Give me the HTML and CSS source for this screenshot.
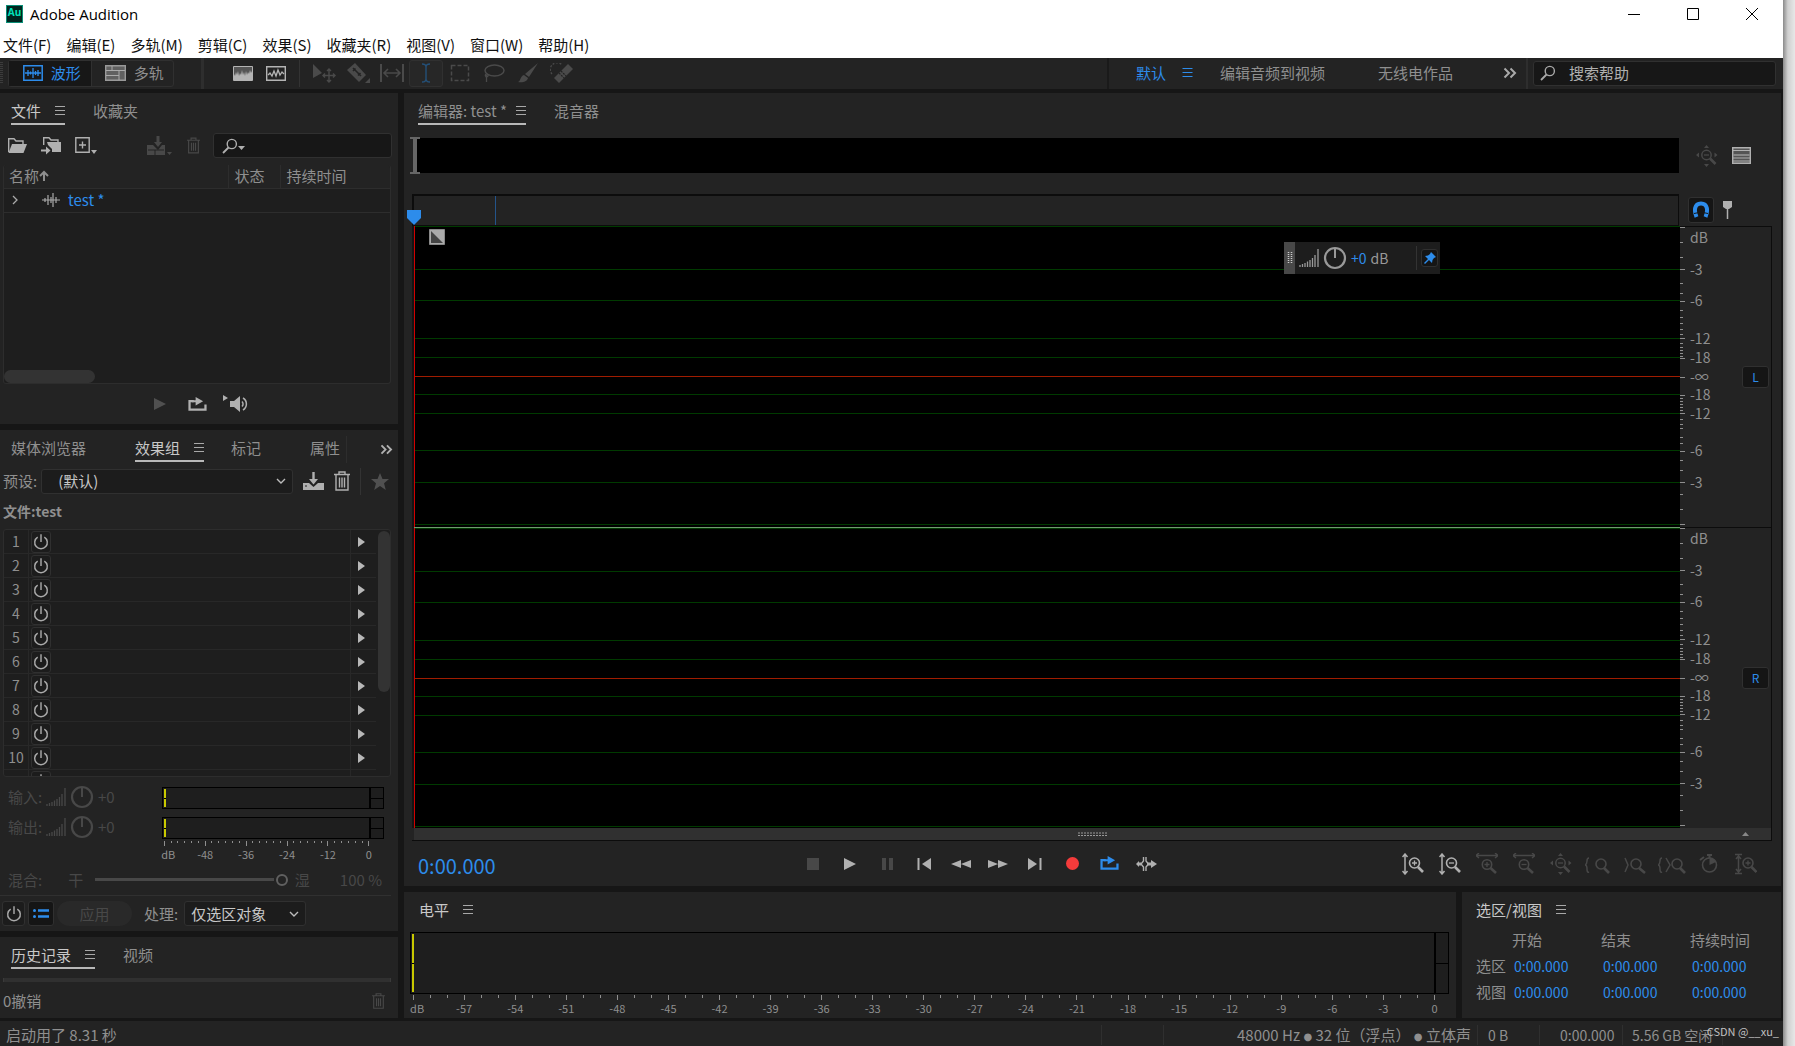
FILE: index.html
```html
<!DOCTYPE html>
<html lang="zh-CN">
<head>
<meta charset="utf-8">
<title>Adobe Audition</title>
<link rel="stylesheet" href="styles.css">
</head>
<body>
<svg class="defs" aria-hidden="true">
  <symbol id="power" viewBox="0 0 20 20"><path d="M6.3 4.6A7 7 0 1 0 13.7 4.6M10 1.5V10" fill="none" stroke="currentColor" stroke-width="1.6"/></symbol>
  <symbol id="menu" viewBox="0 0 10 10"><path d="M0 .5H10M0 4.5H10M0 8.5H10" stroke="currentColor" stroke-width="1"/></symbol>
  <symbol id="more" viewBox="0 0 14 12"><path d="M1.5 1.5L6 6L1.5 10.5M7.500 1.500L12 6L7.500 10.500" fill="none" stroke="currentColor" stroke-width="2"/></symbol>
  <symbol id="trash" viewBox="0 0 16 20"><path d="M0 3.500H16M5 3V1H11V3M2 4V19H14V4M5.500 6.500V16.500M8 6.500V16.500M10.500 6.500V16.500" fill="none" stroke="currentColor" stroke-width="1.400"/></symbol>
  <symbol id="bars" viewBox="0 0 20 18"><path d="M1 16V18M3.500 15V18M6 14V18M8.500 12.500V18M11 11V18M13.500 9V18M16 6V18M19 0V18" stroke="currentColor" stroke-width="1.300"/></symbol>
  <symbol id="knob" viewBox="0 0 24 24"><circle cx="12" cy="12" r="10" fill="none" stroke="currentColor" stroke-width="2.200"/><path d="M12 2V12" stroke="currentColor" stroke-width="2"/></symbol>
  <symbol id="search" viewBox="0 0 16 16"><circle cx="9.800" cy="6" r="4.600" fill="none" stroke="currentColor" stroke-width="1.400"/><path d="M6.500 9.500L1 15" stroke="currentColor" stroke-width="1.800"/></symbol>
  <symbol id="loop" viewBox="0 0 20 16"><path d="M6 4.500H1.500V13.500H18.500V8" fill="none" stroke="currentColor" stroke-width="2.400"/><path d="M4 3.500H8V0L16 4.500L8 9V5.500H4Z" fill="currentColor"/></symbol>
  <symbol id="zoomall" viewBox="0 0 22 22"><circle cx="10.500" cy="10" r="4.700" fill="none" stroke="currentColor" stroke-width="1.500"/><path d="M8 10H13" stroke="currentColor" stroke-width="1.300"/><path d="M14 13.500L19.500 19" stroke="currentColor" stroke-width="2.600"/><path d="M8 3L10.500 0L13 3ZM8 19L10.500 22L13 19ZM3 7.500L0 10L3 12.500ZM18.500 7.500L21.500 10L18.500 12.500Z" fill="currentColor"/></symbol>
  <symbol id="grip" viewBox="0 0 30 4"><path d="M0 1H30M0 3.500H30" stroke="currentColor" stroke-width="1" stroke-dasharray="2 1"/></symbol>
</svg>

<div class="screen">
<div class="window">
  <header class="titlebar">
    <svg class="logo" viewBox="0 0 17 18"><rect x=".5" y=".5" width="16" height="17" fill="#00261f" stroke="#0a8f78"/><text x="8.500" y="11" text-anchor="middle">Au</text></svg>
    <h1>Adobe Audition</h1>
    <div class="winctl">
      <button aria-label="最小化"><svg width="14" height="14"><path d="M1 7.500H13" stroke="#000"/></svg></button>
      <button aria-label="最大化"><svg width="14" height="14"><path d="M1.500 1.500H12.500V12.500H1.500Z" fill="none" stroke="#000"/></svg></button>
      <button aria-label="关闭"><svg width="14" height="14"><path d="M1 1L13 13M13 1L1 13" stroke="#000"/></svg></button>
    </div>
  </header>
  <nav class="menubar">
    <a href="#">文件(F)</a><a href="#">编辑(E)</a><a href="#">多轨(M)</a><a href="#">剪辑(C)</a><a href="#">效果(S)</a><a href="#">收藏夹(R)</a><a href="#">视图(V)</a><a href="#">窗口(W)</a><a href="#">帮助(H)</a>
  </nav>

  <div class="toolbar">
    <span class="tgrip"></span>
    <div class="modes">
      <button class="on"><svg width="20" height="16" viewBox="0 0 20 16"><path d="M.8.800H19.200V15.200H.8Z" fill="none" stroke="currentColor" stroke-width="1.500"/><path d="M2 8H18M5 5V11M7.500 6.500V9.500M10 3V13M12.500 6V10M15 5V11" stroke="currentColor" stroke-width="1.300"/></svg>波形</button>
      <button><svg width="21" height="16" viewBox="0 0 21 16"><path d="M.7.700H20.300V15.300H.7Z" fill="#606060" stroke="#999" stroke-width="1.400"/><path d="M1 5.500H20M7 1V5.500M1 10.500H14M14 6V15" stroke="#aaa" stroke-width="1"/></svg>多轨</button>
    </div>
    <span class="vsep thick"></span>
    <div class="views">
      <button aria-label="频谱"><svg width="20" height="15" viewBox="0 0 20 15"><path d="M.5.500H19.500V14.500H.5Z" fill="#555" stroke="#b4b4b4"/><path d="M1 14V8L2 10L3 6L4 9L5 5L6 10L7 7L8 9L9 4L10 9L11 6L12 10L13 5L14 9L15 6L16 8L17 4L18 7L19 5V14Z" fill="#b4b4b4"/></svg></button>
      <button aria-label="波形图"><svg width="20" height="15" viewBox="0 0 20 15"><path d="M.7.700H19.300V14.300H.7Z" fill="none" stroke="#b4b4b4" stroke-width="1.400"/><path d="M2 9L4 7L6 10L8 5L10 10L12 4L14 9L16 6L18 8" fill="none" stroke="#b4b4b4" stroke-width="1.300"/></svg></button>
    </div>
    <span class="vsep"></span>
    <div class="tools">
      <button aria-label="移动"><svg viewBox="0 0 24 20"><path d="M1 1L10 10L1 15Z" fill="currentColor"/><path d="M17 6V19M11 12.500H23M15 8L17 6L19 8M15 17L17 19L19 17M13 10.500L11 12.500L13 14.500M21 10.500L23 12.500L21 14.500" fill="none" stroke="currentColor" stroke-width="1.400"/></svg></button>
      <button aria-label="切割"><svg viewBox="0 0 24 20"><path d="M9 0L20 12L13 19L1 7Z" fill="currentColor"/><path d="M7 5L15 13M7 8L9.500 5.500M12 12.500L14.500 10" stroke="#232323" stroke-width="1.600"/><path d="M24 15V20H19Z" fill="currentColor"/></svg></button>
      <button aria-label="滑动"><svg viewBox="0 0 24 20"><path d="M1 1V19M23 1V19" stroke="currentColor" stroke-width="2"/><path d="M4 10H20M8 6L4 10L8 14M16 6L20 10L16 14" fill="none" stroke="currentColor" stroke-width="1.600"/></svg></button>
      <button class="sel" aria-label="时间选区"><svg viewBox="0 0 24 20"><path d="M8 1C11 1 12 2 12 4V16C12 18 13 19 16 19M16 1C13 1 12 2 12 4M12 16C12 18 11 19 8 19" fill="none" stroke="currentColor" stroke-width="1.400"/></svg></button>
      <button aria-label="框选"><svg viewBox="0 0 24 20"><path d="M3.500 2.500H20.500V17.500H3.500Z" fill="none" stroke="currentColor" stroke-width="1.500" stroke-dasharray="4 2"/></svg></button>
      <button aria-label="套索"><svg viewBox="0 0 24 20"><ellipse cx="12.500" cy="7.500" rx="9.500" ry="5.500" fill="none" stroke="currentColor" stroke-width="1.500"/><path d="M4 11C2 13 5 15 6 13S3 11 4.500 15V19" fill="none" stroke="currentColor" stroke-width="1.300"/></svg></button>
      <button aria-label="画笔"><svg viewBox="0 0 24 20"><path d="M22 0L13 14L9 11Z M8 12L12 15C11 19 6 20 2 19C5 18 4 13 8 12Z" fill="currentColor"/></svg></button>
      <button aria-label="修复"><svg viewBox="0 0 24 20"><path d="M18 1L23 6L9 20L4 15Z" fill="currentColor"/><path d="M2 11A6 6 0 0 1 12 2" fill="none" stroke="currentColor" stroke-width="1.300" stroke-dasharray="2 1.500"/><path d="M11 8L16 13M9 10L14 15" stroke="#232323" stroke-width="1.300" stroke-dasharray="2 1"/></svg></button>
    </div>
    <nav class="spaces">
      <a class="on" href="#">默认<svg width="11" height="10"><use href="#menu"/></svg></a>
      <a href="#">编辑音频到视频</a>
      <a href="#">无线电作品</a>
      <button aria-label="更多工作区"><svg width="14" height="12"><use href="#more"/></svg></button>
    </nav>
    <label class="help"><svg width="16" height="16"><use href="#search"/></svg><input type="text" placeholder="搜索帮助" aria-label="搜索帮助"></label>
  </div>

  <main class="work">
    <div class="left">
      <section class="panel files">
        <div class="tabs"><button class="tab on bright">文件<svg width="10" height="10"><use href="#menu"/></svg></button><button class="tab">收藏夹</button></div>
        <div class="filetools">
          <button aria-label="打开"><svg width="20" height="16" viewBox="0 0 20 16"><path d="M.7 14V.7H6L8 3H15V6" fill="none" stroke="currentColor" stroke-width="1.400"/><path d="M4 6H19L15.500 15H.5Z" fill="currentColor"/></svg></button>
          <button aria-label="导入"><svg width="21" height="18" viewBox="0 0 21 18"><path d="M2.700 8V.7H8L10 3H17V5" fill="none" stroke="currentColor" stroke-width="1.400"/><path d="M6 5H20V15H11V12L7 8Z" fill="currentColor"/><path d="M0 13.500H6" stroke="currentColor" stroke-width="2"/><path d="M5 9.500L9.500 13.500L5 17.500Z" fill="currentColor"/></svg></button>
          <button aria-label="新建"><svg width="22" height="18" viewBox="0 0 22 18"><path d="M.8.800H14.200V15.200H.8Z M7.500 4.500V11.500M4 8H11" fill="none" stroke="currentColor" stroke-width="1.400"/><path d="M16 13H22L19 17Z" fill="currentColor"/></svg></button>
          <button class="dim gapped" aria-label="插入多轨"><svg width="25" height="20" viewBox="0 0 25 20"><path d="M0 9H6L11 14L15 9H18V19H0Z" fill="currentColor"/><path d="M11 0V7" stroke="currentColor" stroke-width="3"/><path d="M7 6H15L11 11Z" fill="currentColor"/><path d="M1 14H17M8 14V19" stroke="#232323" stroke-width="1"/><path d="M20 16H25L22.500 19Z" fill="currentColor"/></svg></button>
          <button class="dim" aria-label="删除"><svg width="13" height="17"><use href="#trash"/></svg></button>
          <label class="field find"><svg width="16" height="16"><use href="#search"/></svg><svg class="caret" width="7" height="4"><path d="M0 0H7L3.500 4Z" fill="currentColor"/></svg><input type="text" aria-label="搜索文件"></label>
        </div>
        <div class="filelist">
          <table>
            <thead><tr><th>名称<svg width="10" height="12" viewBox="0 0 10 12"><path d="M5 11V2M1 6L5 2L9 6" fill="none" stroke="currentColor" stroke-width="2"/></svg></th><th class="c2">状态</th><th class="c3">持续时间</th></tr></thead>
            <tbody><tr><td colspan="3"><div class="fname"><svg width="6" height="10" viewBox="0 0 6 10"><path d="M1 1L5 5L1 9" fill="none" stroke="#aaa" stroke-width="1.300"/></svg><svg class="wv" width="18" height="14" viewBox="0 0 18 14"><path d="M0 7H18M3 5V9M6 2V12M9 4V10M11 0V14M14 4V10" stroke="#aaa" stroke-width="1.200"/></svg>test *</div></td></tr></tbody>
          </table>
          <div class="hscroll"></div>
        </div>
        <div class="preview">
          <button class="dim" aria-label="播放"><svg width="12" height="12"><path d="M0 0L12 6L0 12Z" fill="currentColor"/></svg></button>
          <button aria-label="循环"><svg width="19" height="15"><use href="#loop"/></svg></button>
          <button aria-label="自动播放"><svg width="26" height="18" viewBox="0 0 26 18"><path d="M0 0L5 3L0 6ZM7 6H11L17 1V17L11 12H7Z" fill="currentColor"/><path d="M19 6.500A3.500 3.500 0 0 1 19 11.500M20 3A7 7 0 0 1 20 15" fill="none" stroke="currentColor" stroke-width="1.500"/></svg></button>
        </div>
      </section>

      <section class="panel fx">
        <div class="tabs wide"><button class="tab">媒体浏览器</button><button class="tab on bright">效果组<svg width="10" height="10"><use href="#menu"/></svg></button><button class="tab">标记</button><button class="tab last">属性</button><span class="vsep"></span><button class="more" aria-label="更多面板"><svg width="13" height="11"><use href="#more"/></svg></button></div>
        <div class="preset">
          <label for="preset">预设:</label>
          <select id="preset"><option>(默认)</option></select>
          <button aria-label="保存预设"><svg width="21" height="18" viewBox="0 0 21 18"><path d="M0 11H6L10.500 15L15 11H21V18H0Z" fill="currentColor"/><path d="M10.500 0V8" stroke="currentColor" stroke-width="2.400"/><path d="M6 7H15L10.500 12.500Z" fill="currentColor"/><path d="M2 14H4" stroke="#222"/></svg></button>
          <button aria-label="删除预设"><svg width="16" height="20"><use href="#trash"/></svg></button>
          <span class="vsep"></span>
          <button class="dim" aria-label="收藏"><svg width="18" height="17" viewBox="0 0 18 17"><path d="M9 0L11.500 6H18L13 10.300L14.800 17L9 13L3.200 17L5 10.300L0 6H6.500Z" fill="currentColor"/></svg></button>
        </div>
        <h2 class="fxfile">文件:test</h2>
        <div class="rack"><ol id="rack"></ol><div class="vscroll"></div></div>
        <div class="io">
          <div class="iorow"><span>输入:</span><svg width="20" height="18"><use href="#bars"/></svg><svg width="24" height="24"><use href="#knob"/></svg><span>+0</span><div class="meter"><i></i></div></div>
          <div class="iorow"><span>输出:</span><svg width="20" height="18"><use href="#bars"/></svg><svg width="24" height="24"><use href="#knob"/></svg><span>+0</span><div class="meter"><i></i></div></div>
          <svg class="ruler small" id="ruler-small"></svg>
        </div>
        <div class="mix"><label for="mix">混合:</label><span class="dry">干</span><input id="mix" type="range" min="0" max="100" value="100" disabled><span>湿</span><span class="pct">100 %</span></div>
        <div class="apply">
          <button class="box" aria-label="启用"><svg width="18" height="18"><use href="#power"/></svg></button>
          <button class="box blue" aria-label="列表"><svg width="16" height="12" viewBox="0 0 16 12"><path d="M5 2.500H16M5 8.500H16" stroke="currentColor" stroke-width="2.600"/><circle cx="1.500" cy="2.500" r="1.500" fill="currentColor"/><circle cx="1.500" cy="8.500" r="1.500" fill="currentColor"/></svg></button>
          <button class="pill" disabled>应用</button>
          <label for="proc">处理:</label>
          <select id="proc"><option>仅选区对象</option></select>
        </div>
      </section>

      <section class="panel history">
        <div class="tabs"><button class="tab on bright">历史记录<svg width="10" height="10"><use href="#menu"/></svg></button><button class="tab">视频</button></div>
        <div class="groove"></div>
        <div class="undo"><span>0撤销</span><button class="dim" aria-label="清除历史"><svg width="13" height="16"><use href="#trash"/></svg></button></div>
      </section>
    </div>

    <div class="right">
      <section class="panel editor">
        <div class="tabs"><button class="tab on">编辑器: test *<svg width="10" height="10"><use href="#menu"/></svg></button><button class="tab">混音器</button></div>
        <div class="overview">
          <div class="track"><svg class="bracket" width="10" height="37"><path d="M0 1H10M0 36H10" stroke="#666" stroke-width="2"/><path d="M5 0V37" stroke="#666" stroke-width="4"/></svg></div>
          <div class="side"><svg class="dim" width="22" height="22"><use href="#zoomall"/></svg><svg width="19" height="17" viewBox="0 0 19 17"><path d="M.7.700H18.300V16.300H.7Z" fill="#555" stroke="currentColor" stroke-width="1.400"/><path d="M1 3.500H18M1 11H18M1 14H18" stroke="currentColor"/><path d="M1 8H18" stroke="#888" stroke-width="2"/></svg></div>
        </div>
        <div class="timeline">
          <div class="times"><i class="tick"></i><svg class="playhead" width="14" height="15"><path d="M0 0H14V8L7 15L0 8Z" fill="#2d8ceb"/></svg></div>
          <div class="side snap"><button class="box blue" aria-label="对齐"><svg width="16" height="17" viewBox="0 0 16 17"><path d="M3.500 16C1 10 1 2.500 8 2.500S15 10 12.500 16" fill="none" stroke="currentColor" stroke-width="4"/><path d="M1 12.500L6 11.500M15 12.500L10 11.500" stroke="#171717"/></svg></button><svg width="9" height="18"><path d="M0 0H9V6L6 8H3L0 6Z" fill="currentColor"/><path d="M4.500 6V18" stroke="currentColor" stroke-width="1.500"/></svg></div>
        </div>
        <div class="waves">
          <div class="wave">
            <svg class="lines"></svg><i class="split"></i><svg class="lines"></svg>
            <svg class="fade" width="16" height="16"><path d="M.5.500H15.500V15.500H.5Z" fill="#aaa" stroke="#888"/><path d="M2 2L14 14H2Z" fill="#444"/></svg>
            <div class="hud"><svg class="hgrip" width="11" height="32"><path d="M4.500 10V22M7.500 10V22" stroke="#ccc" stroke-width="1.500" stroke-dasharray="1 1"/></svg><svg width="20" height="18"><use href="#bars"/></svg><svg width="24" height="24"><use href="#knob"/></svg><span class="val">+0</span><span>dB</span><span class="hsep"></span><button class="box blue" aria-label="固定"><svg width="12" height="12" viewBox="0 0 12 12"><path d="M7 0L12 5L10 6L8.500 8L8 11L5 8L1 12L0 11L4 7L1 4L4 3.500L6 2Z" fill="currentColor"/></svg></button></div>
          </div>
          <div class="scale">
            <div class="chan"><svg class="dbs"></svg><button class="box blue">L</button></div>
            <div class="chan"><svg class="dbs"></svg><button class="box blue">R</button></div>
          </div>
          <div class="zoombar"><svg width="30" height="4"><use href="#grip"/></svg><svg class="up" width="7" height="4"><path d="M0 4L3.500 0L7 4Z" fill="#888"/></svg></div>
        </div>
        <div class="transport">
          <output class="clock">0:00.000</output>
          <div class="play">
            <button class="dim" aria-label="停止"><svg width="12" height="12"><rect width="12" height="12" fill="currentColor"/></svg></button>
            <button aria-label="播放"><svg width="12" height="12"><path d="M0 0L12 6L0 12Z" fill="currentColor"/></svg></button>
            <button class="dim" aria-label="暂停"><svg width="11" height="12"><path d="M2 0V12M9 0V12" stroke="currentColor" stroke-width="4"/></svg></button>
            <button aria-label="到开头"><svg width="14" height="12"><path d="M1.500 0V12" stroke="currentColor" stroke-width="2"/><path d="M14 0L5 6L14 12Z" fill="currentColor"/></svg></button>
            <button aria-label="快退"><svg width="20" height="10"><path d="M10 1L0 5L10 9ZM20 1L10 5L20 9Z" fill="currentColor"/></svg></button>
            <button aria-label="快进"><svg width="20" height="10"><path d="M0 1L10 5L0 9ZM10 1L20 5L10 9Z" fill="currentColor"/></svg></button>
            <button aria-label="到结尾"><svg width="14" height="12"><path d="M12.500 0V12" stroke="currentColor" stroke-width="2"/><path d="M0 0L9 6L0 12Z" fill="currentColor"/></svg></button>
            <button class="rec" aria-label="录制"><svg width="13" height="13"><circle cx="6.500" cy="6.500" r="6.500" fill="currentColor"/></svg></button>
            <button class="bl" aria-label="循环播放"><svg width="19" height="15"><use href="#loop"/></svg></button>
            <button aria-label="跳过选区"><svg width="21" height="14" viewBox="0 0 21 14"><path d="M2 7H5M11 7H17" stroke="currentColor" stroke-width="3"/><path d="M0 7L3 4V10Z" fill="currentColor"/><path d="M7.500 0V4L5 7L7.500 10V14M10 0V4L12.500 7L10 10V14" fill="none" stroke="currentColor" stroke-width="1.400"/><path d="M15 3L21 7L15 11Z" fill="currentColor"/></svg></button>
          </div>
          <div class="zooms">
            <button aria-label="放大振幅"><svg viewBox="0 0 22 22"><path d="M3 1V21M.5 4L3 1L5.500 4M.5 18L3 21L5.500 18" fill="none" stroke="currentColor" stroke-width="1.500"/><circle cx="12.500" cy="10" r="5" fill="none" stroke="currentColor" stroke-width="1.600"/><path d="M10 10H15M12.500 7.500V12.500" stroke="currentColor" stroke-width="1.300"/><path d="M16 14L21 19" stroke="currentColor" stroke-width="2.600"/></svg></button>
            <button aria-label="缩小振幅"><svg viewBox="0 0 22 22"><path d="M3 1V21M.5 4L3 1L5.500 4M.5 18L3 21L5.500 18" fill="none" stroke="currentColor" stroke-width="1.500"/><circle cx="12.500" cy="10" r="5" fill="none" stroke="currentColor" stroke-width="1.600"/><path d="M10 10H15" stroke="currentColor" stroke-width="1.300"/><path d="M16 14L21 19" stroke="currentColor" stroke-width="2.600"/></svg></button>
            <button class="dim" aria-label="放大时间"><svg viewBox="0 0 22 22"><path d="M0 2.500H22M3 0L0 2.500L3 5M19 0L22 2.500L19 5" fill="none" stroke="currentColor" stroke-width="1.400"/><circle cx="11" cy="11.500" r="4.700" fill="none" stroke="currentColor" stroke-width="1.600"/><path d="M8.500 11.500H13.500M11 9V14" stroke="currentColor" stroke-width="1.300"/><path d="M14.500 15L20 20" stroke="currentColor" stroke-width="2.600"/></svg></button>
            <button class="dim" aria-label="缩小时间"><svg viewBox="0 0 22 22"><path d="M0 2.500H22M3 0L0 2.500L3 5M19 0L22 2.500L19 5" fill="none" stroke="currentColor" stroke-width="1.400"/><circle cx="11" cy="11.500" r="4.700" fill="none" stroke="currentColor" stroke-width="1.600"/><path d="M8.500 11.500H13.500" stroke="currentColor" stroke-width="1.300"/><path d="M14.500 15L20 20" stroke="currentColor" stroke-width="2.600"/></svg></button>
            <button class="dim" aria-label="全部缩小"><svg><use href="#zoomall"/></svg></button>
            <button class="dim" aria-label="放大入点"><svg class="mid" viewBox="0 0 25 22"><path d="M4 5Q2 5 2 8T0 12Q2 12 2 16T4 19" fill="none" stroke="currentColor" stroke-width="1.500"/><circle cx="16" cy="11" r="5" fill="none" stroke="currentColor" stroke-width="1.600"/><path d="M19 15L24 20" stroke="currentColor" stroke-width="2.600"/></svg></button>
            <button class="dim" aria-label="放大出点"><svg viewBox="0 0 22 22"><path d="M1 5L4 12L1 19" fill="none" stroke="currentColor" stroke-width="1.500"/><circle cx="12" cy="11" r="5" fill="none" stroke="currentColor" stroke-width="1.600"/><path d="M15 15L21 20" stroke="currentColor" stroke-width="2.600"/></svg></button>
            <button class="dim" aria-label="放大选区"><svg class="long" viewBox="0 0 28 22"><path d="M4 5Q2 5 2 8T0 12Q2 12 2 16T4 19M8 5L12 12L8 19" fill="none" stroke="currentColor" stroke-width="1.500"/><circle cx="19" cy="11" r="5" fill="none" stroke="currentColor" stroke-width="1.600"/><path d="M22 15L27 20" stroke="currentColor" stroke-width="2.600"/></svg></button>
            <button class="dim" aria-label="计时缩放"><svg viewBox="0 0 22 22"><circle cx="11.500" cy="12" r="7" fill="none" stroke="currentColor" stroke-width="1.600"/><path d="M11.500 12V5A7 7 0 0 1 18 9Z" fill="currentColor"/><path d="M9 2H14M11.500 2V5M2 7L6 4" stroke="currentColor" stroke-width="2"/></svg></button>
            <button class="dim" aria-label="缩放高度"><svg viewBox="0 0 22 22"><path d="M0 1.500H7M0 20.500H7M3.500 3V19M1 6L3.500 3L6 6M1 16L3.500 19L6 16" fill="none" stroke="currentColor" stroke-width="1.500"/><circle cx="13" cy="10" r="5" fill="none" stroke="currentColor" stroke-width="1.600"/><path d="M10.500 10H15.500M13 7.500V12.500" stroke="currentColor" stroke-width="1.300"/><path d="M16.500 14L21.500 19" stroke="currentColor" stroke-width="2.600"/></svg></button>
          </div>
        </div>
      </section>

      <div class="bottom">
        <section class="panel levels">
          <div class="tabs"><button class="tab bright">电平<svg width="10" height="10"><use href="#menu"/></svg></button></div>
          <div class="meter big"><i></i></div>
          <svg class="ruler" id="ruler-big"></svg>
        </section>
        <section class="panel selection">
          <div class="tabs"><button class="tab bright">选区/视图<svg width="10" height="10"><use href="#menu"/></svg></button></div>
          <table>
            <tr><td></td><th>开始</th><th>结束</th><th>持续时间</th></tr>
            <tr><th>选区</th><td>0:00.000</td><td>0:00.000</td><td>0:00.000</td></tr>
            <tr><th>视图</th><td>0:00.000</td><td>0:00.000</td><td>0:00.000</td></tr>
          </table>
        </section>
      </div>
    </div>
  </main>

  <footer class="status">
    <span class="msg">启动用了 8.31 秒</span>
    <span class="s1"></span><span class="s2"></span>
    <span class="fmt">48000 Hz <b>●</b> 32 位（浮点） <b>●</b> 立体声</span>
    <span class="s3">0 B</span><span class="s4">0:00.000</span><span class="s5">5.56 GB 空闲</span>
    <span class="mark">CSDN @__xu_</span>
  </footer>
</div>
<div class="desktop"></div>
</div>
<script src="app.js"></script>
</body>
</html>
```
FILE: styles.css
```css
* { box-sizing: border-box; }
body {
  margin: 0;
  background: #e6e6e6;
  color: #8f8f8f;
  font: 15px/22px "Noto Sans CJK SC", sans-serif;
}
button, input, select, output { font: inherit; color: inherit; }
button { background: none; border: 0; padding: 0; display: flex; align-items: center; justify-content: center; white-space: nowrap; }
input { background: none; border: 0; padding: 0; min-width: 0; outline: 0; }
a { color: inherit; text-decoration: none; }
svg { display: block; flex: none; }
table { border-collapse: collapse; }
th { font-weight: 400; text-align: left; }
h1, h2, ol { margin: 0; padding: 0; }
.defs { display: none; }

.screen { display: flex; height: 100vh; min-height: 1000px; }
.window { flex: 1; min-width: 0; display: flex; flex-direction: column; background: #161616; }
.desktop { width: 12px; background: linear-gradient(90deg, #8a8a8a, #cfcfcf 40%, #e8e8e8); }

/* title and menus */
.titlebar { height: 31px; background: #fff; color: #000; display: flex; align-items: center; padding: 0 2px 4px 6px; gap: 7px; }
.titlebar h1 { flex: 1; font: 15px/20px "Open Sans", sans-serif; }
.logo { width: 17px; height: 18px; }
.logo text { font: 700 10px "Open Sans", sans-serif; fill: #00e4bb; }
.winctl { display: flex; }
.winctl button { width: 59px; height: 27px; }
.menubar { height: 27px; background: #fff; color: #111; display: flex; align-items: center; gap: 15px; padding-left: 3px; line-height: 27px; }

/* toolbar */
.toolbar { height: 31px; background: #232323; display: flex; align-items: center; padding-bottom: 1px; }
.tgrip { width: 3px; height: 22px; margin-right: 5px; background: repeating-linear-gradient(#3c3c3c 0 1px, transparent 1px 2px); }
.modes { display: flex; border: 1px solid #303030; border-radius: 3px; height: 27px; width: 166px; }
.modes button { flex: 1; gap: 8px; padding-left: 4px; }
.modes .on { background: #171717; border-right: 1px solid #303030; color: #2d8ceb; }
.vsep { width: 1px; height: 27px; background: #333; flex: none; }
.vsep.thick { width: 3px; height: 31px; background: #2e2e2e; margin-left: 27px; }
.views { display: flex; gap: 13px; padding: 0 13px 0 29px; }
.tools { display: flex; padding-left: 7px; color: #4a4a4a; }
.tools button { width: 34px; height: 27px; }
.tools svg { width: 24px; height: 20px; }
.tools .sel { border: 1px solid #303030; border-radius: 3px; background: #272727; color: #245078; }
.spaces { margin-left: auto; display: flex; align-items: center; border-left: 2px solid #1a1a1a; border-right: 2px solid #2e2e2e; height: 31px; padding: 0 9px 0 27px; gap: 53px; }
.spaces a { display: flex; align-items: center; gap: 16px; }
.spaces a.on { color: #2d8ceb; margin-right: -26px; }
.spaces button { color: #aaa; margin-left: -3px; }
.help { width: 243px; height: 25px; margin: 0 7px 0 5px; background: #171717; border: 1px solid #303030; border-radius: 3px; display: flex; align-items: center; padding-left: 6px; gap: 13px; color: #aaa; }
.help input { flex: 1; }
.help input::placeholder { color: #b0b0b0; opacity: 1; }

/* panels */
.work { flex: 1; min-height: 0; display: flex; gap: 6px; padding: 4px 2px 3px 0; }
.left { width: 398px; flex: none; display: flex; flex-direction: column; gap: 6px; }
.right { flex: 1; min-width: 0; display: flex; flex-direction: column; gap: 6px; }
.panel { background: #232323; display: flex; flex-direction: column; min-width: 0; }
.tabs { display: flex; align-items: center; gap: 28px; padding: 6px 11px 0; height: 32px; flex: none; }
.tab { height: 26px; gap: 14px; border-bottom: 2px solid transparent; line-height: 24px; }
.tab svg { color: #a8a8a8; }
.tab.on { border-color: #b8b8b8; }
.tab.bright { color: #c8c8c8; }
.dim { color: #484848; }
.box { border: 1px solid #303030; border-radius: 3px; background: #1c1c1c; color: #aaa; }
.box.blue { background: #151515; color: #2d8ceb; }

.files { flex: 1; min-height: 0; }
.filetools { display: flex; align-items: center; padding: 1px 6px 0 8px; height: 40px; gap: 13px; color: #b0b0b0; }
.filetools .dim { color: #484848; }
.filetools .gapped { margin: 0 2px 0 37px; }
.field { display: flex; align-items: center; background: #171717; border: 1px solid #303030; border-radius: 3px; }
.find { flex: 1; min-width: 0; height: 25px; padding-left: 8px; }
.find .caret { margin-top: 4px; }
.find input { flex: 1; width: 0; }
.filelist { flex: 1; margin: 0 7px 0 3px; display: flex; flex-direction: column; justify-content: space-between; background: #1e1e1e; border: 1px solid #2d2d2d; border-top: 0; border-radius: 3px; overflow: hidden; }
.filelist table { width: 100%; }
.filelist thead { background: #232323; }
.filelist th { height: 23px; padding: 0 0 0 6px; line-height: 20px; border-left: 1px solid #2d2d2d; }
.filelist th:first-child { border: 0; padding-left: 5px; }
.filelist th svg { display: inline-block; }
.filelist .c2 { width: 52px; }
.filelist .c3 { width: 110px; }
.filelist td { padding: 0; height: 24px; border-top: 1px solid #2d2d2d; border-bottom: 1px solid #2d2d2d; }
.fname { display: flex; align-items: center; padding-left: 8px; gap: 8px; color: #2d8ceb; line-height: 22px; }
.fname .wv { margin-left: 16px; }
.hscroll { width: 91px; height: 13px; border-radius: 7px; background: #333; }
.preview { height: 40px; flex: none; display: flex; align-items: center; justify-content: center; gap: 16px; color: #b0b0b0; padding-left: 4px; }
.preview .dim { color: #505050; margin-right: 6px; }

/* effects rack */
.tabs.wide { gap: 0; padding-right: 5px; }
.tabs.wide .tab { margin-right: 49px; }
.tabs.wide .on { margin-right: 27px; }
.tabs.wide .last { margin-right: 6px; }
.tabs.wide .vsep { background: #2d2d2d; }
.more { color: #b0b0b0; margin-left: auto; }
.preset { display: flex; align-items: center; padding: 0 9px 0 3px; height: 38px; gap: 10px; color: #b0b0b0; }
.preset label { color: #8f8f8f; margin-right: -6px; }
.preset .dim { color: #505050; }
select { appearance: none; height: 25px; border: 1px solid #303030; border-radius: 3px; color: #c8c8c8; line-height: 22px; padding: 0 16px; background: #1c1c1c url("data:image/svg+xml,%3Csvg xmlns='http://www.w3.org/2000/svg' width='10' height='6'%3E%3Cpath d='M1 1L5 5L9 1' fill='none' stroke='%23bbb' stroke-width='1.400'/%3E%3C/svg%3E") no-repeat right 6px center; }
#preset { flex: 1; }
#proc { width: 122px; padding: 0 6px; }
.fxfile { font-size: 14px; line-height: 22px; font-weight: 700; padding: 0 3px; margin-bottom: 7px; }
.rack { margin: 0 7px 0 3px; height: 248px; display: flex; gap: 2px; overflow: hidden; background: #1e1e1e; border: 1px solid #2d2d2d; border-radius: 3px; }
.rack ol { list-style: none; flex: 1; }
.rack li { height: 24px; display: flex; align-items: center; border-bottom: 1px solid #282828; }
.rack li .no { width: 25px; text-align: center; border-right: 1px solid #282828; line-height: 23px; font-size: 14px; }
.rack li .box { width: 20px; height: 22px; margin-left: 2px; }
.rack li .arrow { margin-left: auto; width: 26px; height: 23px; border-left: 1px solid #282828; color: #b8b8b8; padding-right: 4px; }
.vscroll { width: 12px; height: 161px; border-radius: 6px; background: #333; margin-top: 1px; }
.io { padding: 8px 14px 0 8px; display: flex; flex-direction: column; color: #484848; }
.iorow { display: flex; align-items: center; gap: 4px; height: 30px; padding-bottom: 6px; white-space: nowrap; }
.iorow span:first-child { width: 34px; }
.iorow .meter { margin-top: 2px; }
.meter { position: relative; margin-left: auto; width: 222px; height: 22px; border: 1px solid #000; background: #1e1e1e; }
.meter i { display: block; margin: 1px; width: 2px; height: calc(100% - 2px); background: linear-gradient(#000, #000) center / 100% 1px no-repeat #c8c800; }
/* clip lights at the loud end of a meter */
.meter::after { content: ""; position: absolute; top: 0; right: 0; bottom: 0; width: 12px; border-left: 2px solid #000; background: linear-gradient(#000, #000) center / 100% 1px no-repeat; }
.ruler { height: 24px; width: 100%; overflow: visible; }
.ruler text { font-size: 11px; fill: #8f8f8f; text-anchor: middle; }
.ruler.small { width: 222px; align-self: flex-end; margin-top: -5px; }
.mix { display: flex; align-items: center; height: 32px; padding: 0 9px 0 8px; color: #484848; border-bottom: 1px solid #303030; margin: 0 7px 0 0; }
.mix .dry { margin: 0 10px 0 26px; }
.mix input { flex: 1; appearance: none; height: 14px; margin-right: 7px; background: linear-gradient(#484848, #484848) 0 50% / calc(100% - 14px) 3px no-repeat; }
.mix input::-webkit-slider-thumb { appearance: none; width: 12px; height: 12px; border: 2px solid #606060; border-radius: 50%; background: #232323; }
.mix .pct { margin-left: 30px; }
.apply { display: flex; align-items: center; padding: 5px 2px 5px; gap: 3px; }
.apply .box { width: 23px; height: 25px; }
.apply .box.blue { width: 26px; }
.pill { width: 75px; height: 25px; border-radius: 13px; background: #292929; color: #484848; }
.apply label { margin: 0 3px 0 9px; }

.history { height: 81px; }
.groove { height: 4px; margin: 9px 7px 0 3px; background: #303030; border-left: 1px solid #3a3a3a; border-right: 1px solid #3a3a3a; }
.undo { display: flex; justify-content: space-between; align-items: center; padding: 8px 13px 0 3px; }

/* editor */
.editor { flex: 1; min-height: 0; padding-left: 8px; }
.editor .tabs { padding-left: 6px; height: 45px; align-items: flex-start; }
.editor .tab { gap: 9px; }
.overview { display: flex; height: 35px; margin-bottom: 21px; }
.track { position: relative; flex: 1; margin-left: 1px; background: #000; }
.bracket { position: absolute; left: -3px; top: -1px; }
.side { width: 102px; display: flex; align-items: center; gap: 14px; padding-left: 17px; color: #b0b0b0; }
.side .dim { color: #484848; }
.timeline { display: flex; height: 32px; }
.times { position: relative; flex: 1; border: 2px solid #0c0c0c; border-width: 2px 1px 1px 2px; }
.tick { position: absolute; left: 81px; top: 0; bottom: 0; width: 1px; background: #24548a; }
.playhead { position: absolute; left: -7px; bottom: 0; z-index: 2; }
.snap { gap: 9px; padding: 0 0 1px 9px; }
.snap .box { width: 26px; height: 26px; }
.waves { flex: 1; min-height: 0; display: grid; grid-template-columns: 1fr 92px; grid-template-rows: 1fr 12px; margin-right: 9px; border-bottom: 1px solid #0c0c0c; }
.wave { position: relative; background: #000; border-left: 2px solid #141414; display: flex; flex-direction: column; min-height: 0; box-shadow: inset 1px 0 #d00000; }
.lines { flex: 1; width: 100%; min-height: 0; overflow: visible; }
.split { height: 1px; background: #6f9a6f; }
.lines line, .dbs line, .ruler line { shape-rendering: crispEdges; }
.lines .g { stroke: #003a00; }
.lines .m { stroke: #a01c00; }
.fade { position: absolute; left: 15px; top: 3px; }
.hud { position: absolute; right: 240px; top: 16px; width: 156px; height: 32px; display: flex; align-items: center; gap: 4px; background: #1d1d1d; color: #999; padding-right: 2px; font-size: 14px; }
.hud .hgrip { background: #484848; }
.hud .val { color: #2d8ceb; }
.hsep { margin-left: auto; width: 1px; height: 24px; background: #333; }
.hud .box { width: 17px; height: 18px; }
.scale { display: flex; flex-direction: column; border-right: 1px solid #0c0c0c; min-height: 0; }
.chan { flex: 1; min-height: 0; display: flex; align-items: center; justify-content: space-between; border-top: 1px solid #0c0c0c; padding-right: 2px; }
.dbs { width: 50px; height: 100%; overflow: visible; }
.dbs line, .ruler line { stroke: #8f8f8f; }
.dbs text { font-size: 14px; fill: #8f8f8f; }
.chan .box { width: 27px; height: 22px; font-size: 12px; }
.zoombar { grid-column: 1 / 3; background: #303030; display: flex; align-items: center; justify-content: center; color: #999; position: relative; margin-left: 2px; border-right: 1px solid #0c0c0c; }
.up { position: absolute; right: 22px; }
.transport { display: flex; align-items: center; height: 45px; padding-left: 6px; color: #b0b0b0; }
.clock { color: #2d8ceb; font-size: 20px; line-height: 24px; flex: 383 1 0; padding-top: 4px; }
.play, .zooms { display: flex; }
.play button, .zooms button { width: 37px; height: 30px; }
.play .dim, .zooms .dim { color: #484848; }
.play .rec { color: #f53b3b; }
.play .bl { color: #2d8ceb; }
.zooms { flex: 609 1 0; justify-content: flex-end; padding-right: 17px; }
.zooms svg { width: 22px; height: 22px; }
.zooms .mid { width: 25px; }
.zooms .long { width: 28px; }

/* lower panels */
.bottom { display: flex; gap: 6px; height: 126px; flex: none; }
.levels { flex: 1; padding: 0 7px 0 6px; }
.levels .tabs { padding-left: 9px; height: 40px; align-items: flex-start; }
.meter.big { width: 100%; height: 62px; margin: 0; flex: none; }
.selection { width: 319px; padding-left: 14px; }
.selection .tabs { padding-left: 0; }
.selection table { width: 300px; margin-top: 3px; }
.selection td, .selection th { height: 26px; padding: 0; }
.selection td { color: #2d8ceb; font-size: 14px; padding-left: 2px; }
.selection td:first-child, .selection th:first-child { width: 36px; }
.selection th:nth-child(2), .selection th:nth-child(3) { width: 89px; }

.status { height: 25px; background: #232323; display: flex; align-items: center; padding: 2px 5px 0 6px; position: relative; white-space: nowrap; }
.status span { border-right: 1px solid #2f2f2f; line-height: 20px; }
.status .msg { flex: 1; }
.status .s2 { width: 61px; height: 20px; }
.status .fmt { width: 314px; padding-left: 73px; }
.status b { font: 10px "DejaVu Sans", sans-serif; vertical-align: 1px; }
.status .s3 { width: 62px; padding-left: 10px; font-size: 14px; }
.status .s4 { width: 83px; padding-left: 20px; font-size: 14px; }
.status .s5 { width: 100px; padding-left: 9px; margin-right: 55px; font-size: 14px; }
.status .mark { position: absolute; right: 4px; top: 0; border: 0; font-size: 11px; color: #c0c0c0; }
```
FILE: app.js
```js
const NS = 'http://www.w3.org/2000/svg';

function add(svg, tag, attrs, text) {
  const el = document.createElementNS(NS, tag);
  for (const k in attrs) el.setAttribute(k, attrs[k]);
  if (text) el.textContent = text;
  svg.appendChild(el);
}

// effect slots
document.getElementById('rack').innerHTML = Array.from({ length: 11 }, (_, i) =>
  `<li><span class="no">${i + 1}</span>` +
  `<button class="box" aria-label="开关 ${i + 1}"><svg width="18" height="18"><use href="#power"/></svg></button>` +
  `<button class="arrow" aria-label="效果 ${i + 1}"><svg width="7" height="10"><path d="M0 0L7 5L0 10Z" fill="currentColor"/></svg></button></li>`
).join('');

// amplitude grid: position in a 300-unit channel, and its label
const marks = [[43, '-3'], [74, '-6'], [112, '-12'], [131, '-18'], [150, '-∞'],
  [168, '-18'], [187, '-12'], [224, '-6'], [256, '-3']];
const minor = [16, 31, 56, 66, 83, 90, 97, 102, 107, 116, 120, 123, 126, 129,
  171, 174, 177, 181, 184, 192, 197, 202, 210, 216, 233, 243, 268, 283];
const pct = y => (y / 3).toFixed(2) + '%';

document.querySelectorAll('.lines').forEach(svg => {
  [1, ...marks.map(m => m[0]), 298].forEach(y =>
    add(svg, 'line', { x1: 1, x2: '100%', y1: pct(y), y2: pct(y), class: y === 150 ? 'm' : 'g' }));
});
document.querySelectorAll('.dbs').forEach(svg => {
  minor.forEach(y => add(svg, 'line', { x1: 0, x2: 3, y1: pct(y), y2: pct(y) }));
  [1, ...marks.map(m => m[0]), 298].forEach(y =>
    add(svg, 'line', { x1: 0, x2: 5, y1: pct(y), y2: pct(y) }));
  [[11, 'dB'], ...marks].forEach(([y, t]) =>
    add(svg, 'text', { x: 10, y: pct(y), dy: 5 }, t));
});

// level rulers: start and end are shares of the meter's width
function ruler(id, start, end, low, step, sub, long, short) {
  const svg = document.getElementById(id);
  const n = -low / step * sub;
  for (let i = 0; i <= n; i++) {
    const x = (start + (end - start) * i / n).toFixed(2) + '%';
    const major = i % sub === 0;
    add(svg, 'line', { x1: x, x2: x, y1: 1, y2: major ? long : short });
    if (major) add(svg, 'text', { x, y: 19, dx: i ? 0 : 4 }, i ? String(low + i / sub * step) : 'dB');
  }
}
ruler('ruler-big', 0.3, 98.6, -60, 3, 3, 6, 4);
ruler('ruler-small', 1, 93.2, -60, 12, 6, 6, 3);
```
